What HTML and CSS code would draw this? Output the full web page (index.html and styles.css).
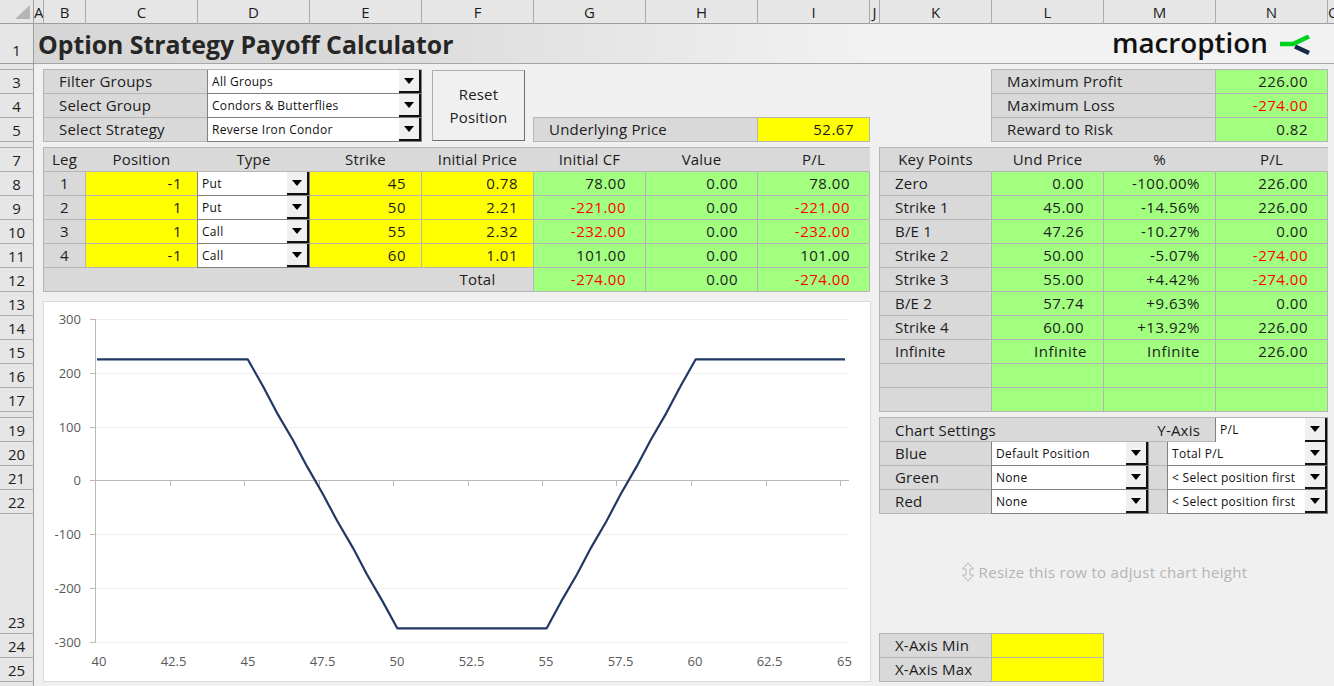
FILE: index.html
```html
<html>
<head>
    <title>Option Strategy Payoff Calculator</title>
    <link rel="stylesheet" href="styles.css">
</head>
<body>
    <div class="col-heads">
        <div class="corner"><span class="corner-mark"></span></div>
        <div class="col-head narrow">A</div>
        <div class="col-head col-b">B</div>
        <div class="col-head">C</div>
        <div class="col-head">D</div>
        <div class="col-head">E</div>
        <div class="col-head">F</div>
        <div class="col-head">G</div>
        <div class="col-head">H</div>
        <div class="col-head">I</div>
        <div class="col-head narrow">J</div>
        <div class="col-head">K</div>
        <div class="col-head">L</div>
        <div class="col-head">M</div>
        <div class="col-head">N</div>
        <div class="col-head col-o">O</div>
    </div>

    <div class="workbook">
        <div class="row-heads">
            <div class="row-head title-row">1</div>
            <div class="row-head gap-row"></div>
            <div class="row-head">3</div>
            <div class="row-head">4</div>
            <div class="row-head">5</div>
            <div class="row-head gap-row"></div>
            <div class="row-head">7</div>
            <div class="row-head">8</div>
            <div class="row-head">9</div>
            <div class="row-head">10</div>
            <div class="row-head">11</div>
            <div class="row-head">12</div>
            <div class="row-head">13</div>
            <div class="row-head">14</div>
            <div class="row-head">15</div>
            <div class="row-head">16</div>
            <div class="row-head">17</div>
            <div class="row-head gap-row"></div>
            <div class="row-head">19</div>
            <div class="row-head">20</div>
            <div class="row-head">21</div>
            <div class="row-head">22</div>
            <div class="row-head tall-row">23</div>
            <div class="row-head">24</div>
            <div class="row-head">25</div>
            <div class="row-head last-row"></div>
        </div>

        <div class="sheet">
            <div class="title-bar">
                <h1 class="title">Option Strategy Payoff Calculator</h1>
                <div class="logo">
                    <span class="logo-text">macroption</span>
                    <svg class="logo-mark" width="32" height="22" viewBox="0 0 32 22">
                        <path d="M16 11.5 L30 18" stroke="#14284b" stroke-width="4.5" fill="none"/>
                        <path d="M1 9 H14 L30 1.5" stroke="#00d21e" stroke-width="4.5" fill="none"/>
                    </svg>
                </div>
            </div>

            <div class="block filters">
                <div class="cell label indent">Filter Groups</div>
                <div class="combo"><span class="combo-text">All Groups</span><span class="combo-btn"></span></div>
                <div class="cell label indent">Select Group</div>
                <div class="combo"><span class="combo-text">Condors &amp; Butterflies</span><span class="combo-btn"></span></div>
                <div class="cell label indent">Select Strategy</div>
                <div class="combo"><span class="combo-text">Reverse Iron Condor</span><span class="combo-btn"></span></div>
            </div>

            <button class="reset-button">Reset<br>Position</button>

            <div class="block underlying">
                <div class="cell label indent">Underlying Price</div>
                <div class="cell input num-tight">52.67</div>
            </div>

            <div class="block summary">
                <div class="cell label indent">Maximum Profit</div>
                <div class="cell result num">226.00</div>
                <div class="cell label indent">Maximum Loss</div>
                <div class="cell result num neg">-274.00</div>
                <div class="cell label indent">Reward to Risk</div>
                <div class="cell result num">0.82</div>
            </div>

            <div class="block legs">
                <div class="cell head top">Leg</div>
                <div class="cell head top">Position</div>
                <div class="cell head top">Type</div>
                <div class="cell head top">Strike</div>
                <div class="cell head top">Initial Price</div>
                <div class="cell head top">Initial CF</div>
                <div class="cell head top">Value</div>
                <div class="cell head top">P/L</div>

                <div class="cell head">1</div>
                <div class="cell input num-tight">-1</div>
                <div class="combo"><span class="combo-text">Put</span><span class="combo-btn"></span></div>
                <div class="cell input num-tight">45</div>
                <div class="cell input num-tight">0.78</div>
                <div class="cell result num">78.00</div>
                <div class="cell result num">0.00</div>
                <div class="cell result num">78.00</div>

                <div class="cell head">2</div>
                <div class="cell input num-tight">1</div>
                <div class="combo"><span class="combo-text">Put</span><span class="combo-btn"></span></div>
                <div class="cell input num-tight">50</div>
                <div class="cell input num-tight">2.21</div>
                <div class="cell result num neg">-221.00</div>
                <div class="cell result num">0.00</div>
                <div class="cell result num neg">-221.00</div>

                <div class="cell head">3</div>
                <div class="cell input num-tight">1</div>
                <div class="combo"><span class="combo-text">Call</span><span class="combo-btn"></span></div>
                <div class="cell input num-tight">55</div>
                <div class="cell input num-tight">2.32</div>
                <div class="cell result num neg">-232.00</div>
                <div class="cell result num">0.00</div>
                <div class="cell result num neg">-232.00</div>

                <div class="cell head">4</div>
                <div class="cell input num-tight">-1</div>
                <div class="combo"><span class="combo-text">Call</span><span class="combo-btn"></span></div>
                <div class="cell input num-tight">60</div>
                <div class="cell input num-tight">1.01</div>
                <div class="cell result num">101.00</div>
                <div class="cell result num">0.00</div>
                <div class="cell result num">101.00</div>

                <div class="cell total-blank"></div>
                <div class="cell head">Total</div>
                <div class="cell result num neg">-274.00</div>
                <div class="cell result num">0.00</div>
                <div class="cell result num neg">-274.00</div>
            </div>

            <div class="block key-points">
                <div class="cell head top">Key Points</div>
                <div class="cell head top">Und Price</div>
                <div class="cell head top">%</div>
                <div class="cell head top">P/L</div>

                <div class="cell label">Zero</div>
                <div class="cell result num">0.00</div>
                <div class="cell result num-tight">-100.00%</div>
                <div class="cell result num">226.00</div>

                <div class="cell label">Strike 1</div>
                <div class="cell result num">45.00</div>
                <div class="cell result num-tight">-14.56%</div>
                <div class="cell result num">226.00</div>

                <div class="cell label">B/E 1</div>
                <div class="cell result num">47.26</div>
                <div class="cell result num-tight">-10.27%</div>
                <div class="cell result num">0.00</div>

                <div class="cell label">Strike 2</div>
                <div class="cell result num">50.00</div>
                <div class="cell result num-tight">-5.07%</div>
                <div class="cell result num neg">-274.00</div>

                <div class="cell label">Strike 3</div>
                <div class="cell result num">55.00</div>
                <div class="cell result num-tight">+4.42%</div>
                <div class="cell result num neg">-274.00</div>

                <div class="cell label">B/E 2</div>
                <div class="cell result num">57.74</div>
                <div class="cell result num-tight">+9.63%</div>
                <div class="cell result num">0.00</div>

                <div class="cell label">Strike 4</div>
                <div class="cell result num">60.00</div>
                <div class="cell result num-tight">+13.92%</div>
                <div class="cell result num">226.00</div>

                <div class="cell label">Infinite</div>
                <div class="cell result num word">Infinite</div>
                <div class="cell result num-tight">Infinite</div>
                <div class="cell result num">226.00</div>

                <div class="cell label"></div>
                <div class="cell result"></div>
                <div class="cell result"></div>
                <div class="cell result"></div>

                <div class="cell label"></div>
                <div class="cell result"></div>
                <div class="cell result"></div>
                <div class="cell result"></div>
            </div>

            <div class="block chart-settings">
                <div class="settings-top">
                    <span>Chart Settings</span>
                    <span class="y-axis-label">Y-Axis</span>
                    <div class="combo"><span class="combo-text">P/L</span><span class="combo-btn"></span></div>
                </div>
                <div class="cell label">Blue</div>
                <div class="combo"><span class="combo-text">Default Position</span><span class="combo-btn"></span></div>
                <div class="cell spacer"></div>
                <div class="combo"><span class="combo-text">Total P/L</span><span class="combo-btn"></span></div>

                <div class="cell label">Green</div>
                <div class="combo"><span class="combo-text">None</span><span class="combo-btn"></span></div>
                <div class="cell spacer"></div>
                <div class="combo"><span class="combo-text">&lt; Select position first</span><span class="combo-btn"></span></div>

                <div class="cell label">Red</div>
                <div class="combo"><span class="combo-text">None</span><span class="combo-btn"></span></div>
                <div class="cell spacer"></div>
                <div class="combo"><span class="combo-text">&lt; Select position first</span><span class="combo-btn"></span></div>
            </div>

            <div class="resize-hint">
                <svg width="12" height="20" viewBox="0 0 12 20">
                    <path d="M6 1 L11.5 7 H8 V13 H11.5 L6 19 L.5 13 H4 V7 H.5 Z" fill="#f0f0f0" stroke="#b4b4b4"/>
                </svg>
                <span>Resize this row to adjust chart height</span>
            </div>

            <div class="block x-axis">
                <div class="cell label">X-Axis Min</div>
                <div class="cell input"></div>
                <div class="cell label">X-Axis Max</div>
                <div class="cell input"></div>
            </div>

            <div class="chart">
                <svg width="828" height="381" viewBox="43 301 828 381">
                    <g stroke="#efefef">
                        <path d="M96 319.5 H849"/>
                        <path d="M96 373.5 H849"/>
                        <path d="M96 427.5 H849"/>
                        <path d="M96 534.5 H849"/>
                        <path d="M96 588.5 H849"/>
                        <path d="M96 642.5 H849"/>
                    </g>
                    <g stroke="#b9b9b9">
                        <path d="M95.5 319 V642.5"/>
                        <path d="M90 319.5 H96 M90 373.5 H96 M90 427.5 H96 M90 480.5 H96 M90 534.5 H96 M90 588.5 H96 M90 642.5 H96"/>
                        <path d="M95.5 480.5 H849"/>
                        <path d="M170.5 480 V486 M244.5 480 V486 M319.5 480 V486 M393.5 480 V486 M468.5 480 V486 M542.5 480 V486 M616.5 480 V486 M691.5 480 V486 M766.5 480 V486 M840.5 480 V486"/>
                    </g>
                    <polyline class="payoff" points="97,359.3 247.7,359.3 263,386.2 277.1,413.1 292.9,440 307.3,466.9 322.7,493.8 337.1,520.7 352.8,547.6 367,574.5 382.6,601.4 397.3,628.3 546.7,628.3 561.2,601.4 576.9,574.5 591.1,547.6 606.7,520.7 620.9,493.8 636.4,466.9 650.7,440 666.3,413.1 680.5,386.2 695.7,359.3 845,359.3"/>
                    <g class="y-labels">
                        <text x="81" y="324">300</text>
                        <text x="81" y="378">200</text>
                        <text x="81" y="432">100</text>
                        <text x="81" y="485">0</text>
                        <text x="81" y="539">-100</text>
                        <text x="81" y="593">-200</text>
                        <text x="81" y="647">-300</text>
                    </g>
                    <g class="x-labels">
                        <text x="99" y="666">40</text>
                        <text x="173.500" y="666">42.5</text>
                        <text x="248" y="666">45</text>
                        <text x="322.500" y="666">47.5</text>
                        <text x="397" y="666">50</text>
                        <text x="471.500" y="666">52.5</text>
                        <text x="546" y="666">55</text>
                        <text x="620.500" y="666">57.5</text>
                        <text x="695" y="666">60</text>
                        <text x="769.500" y="666">62.5</text>
                        <text x="844.500" y="666">65</text>
                    </g>
                </svg>
            </div>
        </div>
    </div>
</body>
</html>
```

FILE: styles.css
```css
html, body {
    margin: 0;
    height: 686px;
    overflow: hidden;
}

body {
    background-color: #f0f0f0;
    color: #1c1c1c;
    font-family: "Open Sans", sans-serif;
    font-size: 15px;
}

/* column letters */
.col-heads {
    display: flex;
    height: 24px;
}

.corner {
    width: 34px;
    box-sizing: border-box;
    background-color: #e6e6e6;
    border-right: 1px solid #9e9e9e;
    border-bottom: 1px solid #9e9e9e;
    padding: 5px 0 0 15px;
}

.corner-mark {
    display: block;
    width: 0;
    height: 0;
    border-left: 15px solid transparent;
    border-bottom: 14px solid #b5b5b5;
}

.col-head {
    width: 112px;
    box-sizing: border-box;
    background-color: #e6e6e6;
    border-right: 1px solid #ababab;
    border-bottom: 1px solid #9e9e9e;
    text-align: center;
    line-height: 24px;
}

.col-head.narrow {
    width: 10px;
    overflow: hidden;
}

.col-head.col-b {
    width: 42px;
}

.col-head.col-o {
    width: 6px;
    overflow: hidden;
    border-right: none;
    text-align: left;
}

.workbook {
    display: flex;
}

/* row numbers */
.row-heads {
    width: 34px;
    flex: none;
}

.row-head {
    height: 24px;
    box-sizing: border-box;
    background-color: #e6e6e6;
    border-right: 1px solid #9e9e9e;
    border-bottom: 1px solid #ababab;
    text-align: center;
    line-height: 24px;
}

.row-head.title-row {
    display: flex;
    align-items: flex-end;
    justify-content: center;
    height: 40px;
    padding-bottom: 1px;
    border-bottom-color: #9e9e9e;
}

.row-head.gap-row {
    height: 6px;
}

.row-head.tall-row {
    display: flex;
    align-items: flex-end;
    justify-content: center;
    height: 120px;
    line-height: 22px;
}

.row-head.last-row {
    height: 4px;
    border-bottom: none;
}

/* the sheet, one track per spreadsheet column and row */
.sheet {
    display: grid;
    grid-template-columns: 9px 43px repeat(7, 112px) 9px 113px repeat(3, 112px);
    grid-template-rows: 40px 5px 25px 24px 24px 5px 25px repeat(5, 24px) repeat(5, 24px) 5px 25px repeat(3, 24px) 119px 25px 24px;
}

.title-bar {
    grid-column: 1 / -1;
    grid-row: 1;
    margin-right: -6px;
    box-sizing: border-box;
    border-bottom: 1px solid #a6a6a6;
    background: linear-gradient(to right, #d6d6d6 0, #d9d9d9 300px, #f2f2f2 840px);
    display: flex;
    justify-content: space-between;
    align-items: center;
    padding: 0 23px 0 4px;
}

.title {
    margin: 1px 0 0;
    font-size: 24.8px;
    font-weight: 700;
    color: #262626;
}

.logo {
    display: flex;
    align-items: center;
    gap: 11px;
}

.logo-text {
    margin-bottom: 4px;
    font-size: 27.8px;
    font-weight: 600;
    line-height: 34px;
    color: #111;
}

.logo-mark {
    margin-top: 4px;
}

.block {
    display: grid;
    align-self: start;
    border-top: 1px solid #b5b5b5;
    border-left: 1px solid #b5b5b5;
}

.cell {
    height: 24px;
    box-sizing: border-box;
    padding-top: 1px;
    border-right: 1px solid #b5b5b5;
    border-bottom: 1px solid #b5b5b5;
    background-color: #d9d9d9;
    line-height: 21px;
    letter-spacing: 0.2px;
    white-space: nowrap;
}

.label {
    padding-left: 15px;
}

.head {
    text-align: center;
}

.head.top {
    border-right-color: #d9d9d9;
}

.input {
    background-color: #ffff00;
}

.result {
    background-color: #a2ff80;
}

.num {
    text-align: right;
    padding-right: 19px;
    letter-spacing: 0.5px;
}

.num.word {
    padding-right: 16px;
}

.num-tight {
    text-align: right;
    padding-right: 15px;
    letter-spacing: 0.5px;
}

.neg {
    color: #ff0000;
}

/* dropdowns */
.combo {
    height: 24px;
    box-sizing: border-box;
    margin-left: -1px;
    display: flex;
    align-items: stretch;
    justify-content: space-between;
    background-color: #fff;
    border-right: 1px solid #808080;
    border-bottom: 1px solid #808080;
    border-left: 1px solid #808080;
    overflow: hidden;
}

.combo-text {
    padding-left: 4px;
    font-size: 12px;
    letter-spacing: 0.3px;
    line-height: 24px;
    color: #111;
    white-space: nowrap;
}

.combo-btn {
    width: 22px;
    flex: none;
    box-sizing: border-box;
    background-color: #f0f0f0;
    border-right: 2px solid #111;
    border-bottom: 2px solid #111;
    position: relative;
}

.combo-btn::after {
    content: "";
    position: absolute;
    top: 8px;
    left: 5px;
    border-left: 5.5px solid transparent;
    border-right: 5.5px solid transparent;
    border-top: 6px solid #000;
}

.filters {
    grid-column: 2 / 6;
    grid-row: 3 / 6;
    grid-template-columns: 164px 214px;
}

.reset-button {
    grid-column: 6;
    grid-row: 3 / 6;
    width: 93px;
    height: 71px;
    margin: 1px 0 0 10px;
    padding: 0;
    background-color: #f0f0f0;
    border: 1px solid #adadad;
    border-right: 1px solid #707070;
    border-bottom: 1px solid #707070;
    color: #1c1c1c;
    font-family: inherit;
    font-size: 15px;
    letter-spacing: 0.2px;
    line-height: 23px;
}

.underlying {
    grid-column: 7 / 10;
    grid-row: 5;
    grid-template-columns: 224px 112px;
    margin: -1px 0 0 -1px;
}

.summary {
    grid-column: 12 / 15;
    grid-row: 3 / 6;
    grid-template-columns: 224px 112px;
    margin-left: -1px;
}

.legs {
    grid-column: 2 / 10;
    grid-row: 7 / 13;
    grid-template-columns: 42px repeat(7, 112px);
}

.total-blank {
    grid-column: span 4;
    border-right: none;
}

.key-points {
    grid-column: 11 / 15;
    grid-row: 7 / 18;
    grid-template-columns: repeat(4, 112px);
}

.chart-settings {
    grid-column: 11 / 15;
    grid-row: 19 / 23;
    grid-template-columns: 112px 157px 19px 160px;
}

.settings-top {
    grid-column: 1 / -1;
    display: flex;
    align-items: center;
    height: 24px;
    box-sizing: border-box;
    padding-left: 15px;
    background-color: #d9d9d9;
    border-right: 1px solid #b5b5b5;
    border-bottom: 1px solid #b5b5b5;
    letter-spacing: 0.2px;
}

.y-axis-label {
    margin-left: auto;
    margin-right: 15px;
}

.settings-top .combo {
    width: 113px;
    flex: none;
    margin-left: 0;
    margin-right: -1px;
    border-bottom: none;
}

.spacer {
    background-color: #d9d9d9;
    border-right: none;
}

.resize-hint {
    grid-column: 11 / 15;
    grid-row: 23;
    display: flex;
    align-items: center;
    justify-content: center;
    gap: 5px;
    padding: 0 0 3px 2px;
    color: #b4b4b4;
    letter-spacing: 0.3px;
}

.x-axis {
    grid-column: 11 / 13;
    grid-row: 24 / 26;
    grid-template-columns: repeat(2, 112px);
}

.chart {
    grid-column: 2 / 10;
    grid-row: 13 / 26;
    margin: 9px -1px 0 0;
    box-sizing: border-box;
    height: 381px;
    background-color: #fff;
    border: 1px solid #d9d9d9;
    overflow: hidden;
}

.chart svg {
    display: block;
    margin: -1px;
}

.payoff {
    fill: none;
    stroke: #203864;
    stroke-width: 2.2;
    stroke-linejoin: round;
}

.y-labels text {
    font-size: 13px;
    fill: #595959;
    text-anchor: end;
}

.x-labels text {
    font-size: 13px;
    fill: #595959;
    text-anchor: middle;
}
```
